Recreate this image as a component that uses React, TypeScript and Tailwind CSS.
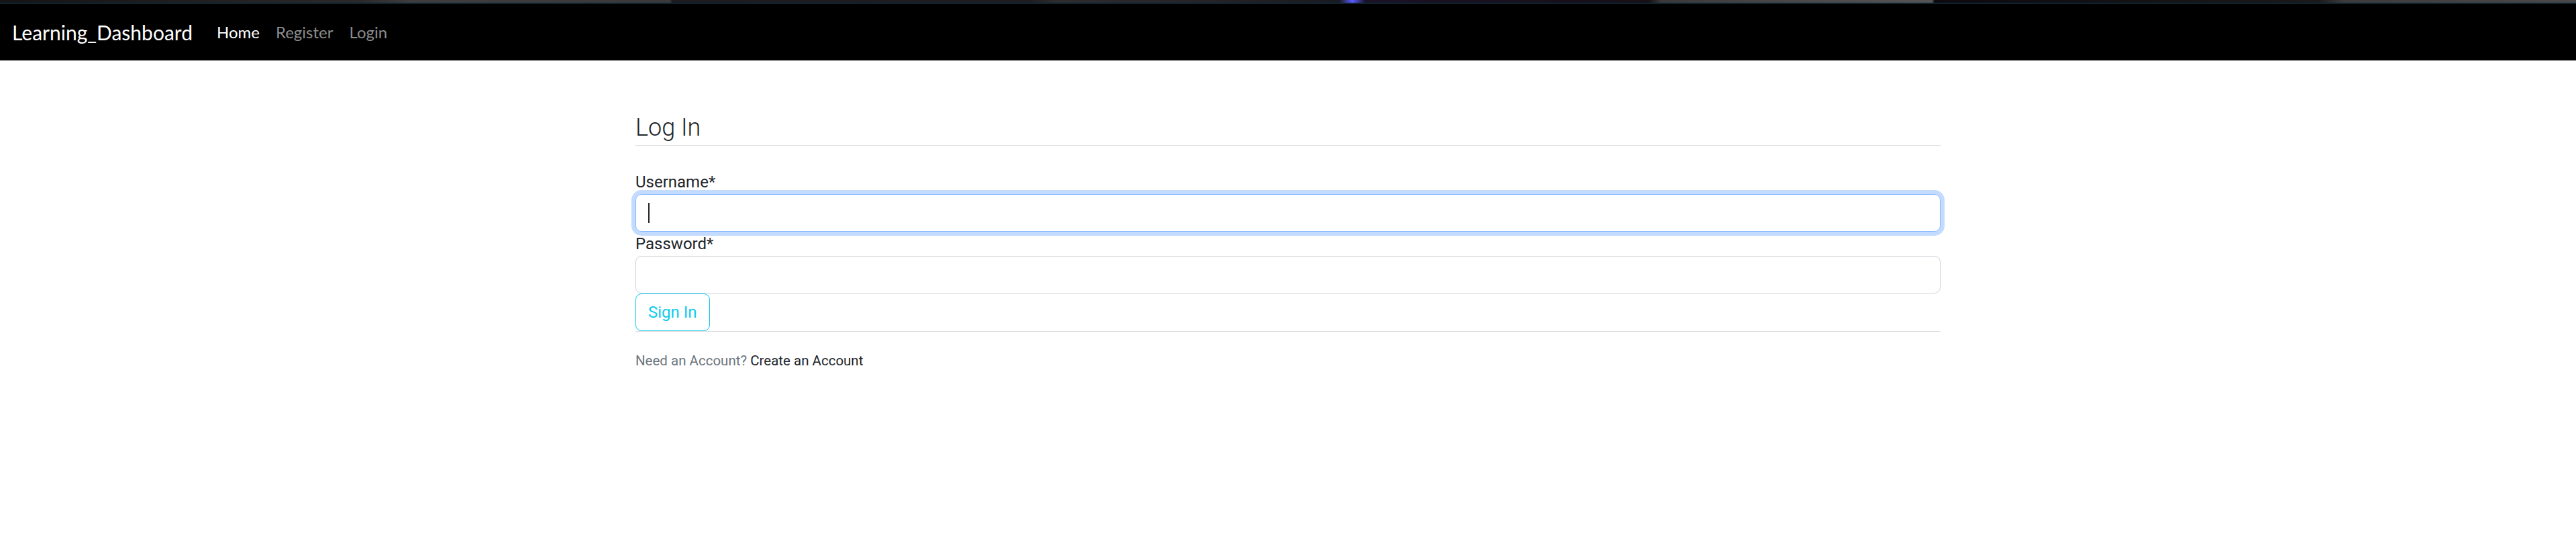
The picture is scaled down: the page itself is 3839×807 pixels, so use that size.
export default function App() {
  return (
    <div className="min-h-[807px] bg-white font-['Roboto',sans-serif] text-[#212529]">
      <div className="h-[4px] bg-[linear-gradient(90deg,#141414_0%,#2a2a2a_14%,#3e3e3e_16%,#3a3a3a_26%,#1c1c20_26.1%,#1e1e22_40%,#2d2d30_41%,#1a1a22_52%,#5a5aff_52.5%,#1a1226_53%,#161018_64%,#3a3a3a_64.5%,#4a4a4a_70%,#555555_75%,#0c0a10_75.1%,#1a1a1a_90%,#3c3c3c_91%,#4a4a4a_100%)]" />
      <div className="h-[2px] bg-[#10222e]" />
      <nav className="flex h-[84px] items-center bg-black px-[18px] font-['Lato',sans-serif]">
        <a className="mr-[24px] text-[30px] leading-none text-white">Learning_Dashboard</a>
        <ul className="flex text-[24px]">
          <li className="px-[12px] text-white">Home</li>
          <li className="px-[12px] text-[#8c8c8c]">Register</li>
          <li className="px-[12px] text-[#8c8c8c]">Login</li>
        </ul>
      </nav>

      <main className="mx-auto w-[1945px] pt-[79px]">
        <h3 className="border-b border-[#dfdfe3] pb-[4px] text-[36px] leading-[1.2] font-light">Log In</h3>

        <form className="mt-[36px] border-b border-[#dedede]">
          <label className="block text-[24px] leading-[36px]">Username*</label>
          <div className="relative">
            <input
              className="block h-[56px] w-full rounded-[9px] border border-[#86b7fe] px-[18px] text-[24px] shadow-[0_0_0_6px_rgba(13,110,253,0.25)] outline-none"
              type="text"
            />
            <span className="absolute left-[19px] top-[13px] h-[30px] w-[2px] bg-[#212529]" />
          </div>
          <label className="block text-[24px] leading-[36px]">Password*</label>
          <input
            className="block h-[56px] w-full rounded-[9px] border border-[#ced4da] px-[18px] text-[24px] outline-none"
            type="password"
          />
          <button
            type="button"
            className="block h-[56px] rounded-[9px] border border-[#0dcaf0] px-[18px] text-[24px] leading-[36px] text-[#0dcaf0]"
          >
            Sign In
          </button>
        </form>

        <p className="mt-[28px] text-[20.5px] leading-[1.5]">
          <span className="text-[#6c757d]">Need an Account? </span>
          <a className="text-[#212529]">Create an Account</a>
        </p>
      </main>
    </div>
  );
}
